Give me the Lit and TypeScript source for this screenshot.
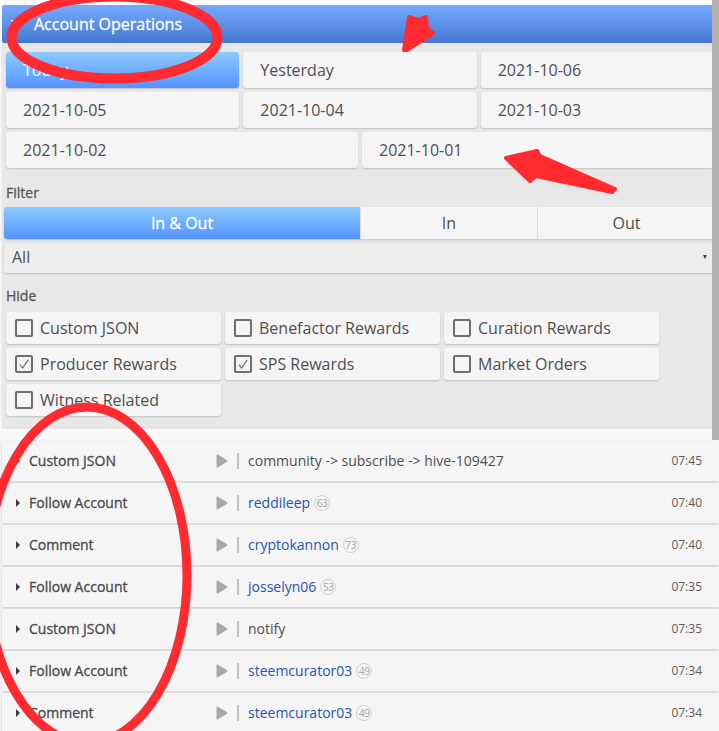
import { LitElement, html, css, svg, nothing } from "lit";
import { customElement } from "lit/decorators.js";

interface OpRow {
  name: string;
  detail: string;
  rep?: number;
  time: string;
}

const DATES = ["Today", "Yesterday", "2021-10-06", "2021-10-05", "2021-10-04", "2021-10-03"];
const WIDE_DATES = ["2021-10-02", "2021-10-01"];

const HIDE = [
  { label: "Custom JSON", on: false },
  { label: "Benefactor Rewards", on: false },
  { label: "Curation Rewards", on: false },
  { label: "Producer Rewards", on: true },
  { label: "SPS Rewards", on: true },
  { label: "Market Orders", on: false },
  { label: "Witness Related", on: false },
];

const ROWS: OpRow[] = [
  { name: "Custom JSON", detail: "community -> subscribe -> hive-109427", time: "07:45" },
  { name: "Follow Account", detail: "reddileep", rep: 63, time: "07:40" },
  { name: "Comment", detail: "cryptokannon", rep: 73, time: "07:40" },
  { name: "Follow Account", detail: "josselyn06", rep: 53, time: "07:35" },
  { name: "Custom JSON", detail: "notify", time: "07:35" },
  { name: "Follow Account", detail: "steemcurator03", rep: 49, time: "07:34" },
  { name: "Comment", detail: "steemcurator03", rep: 49, time: "07:34" },
];

@customElement("app-root")
export class AppRoot extends LitElement {
  static styles = css`
    :host {
      display: block;
      position: relative;
      width: 719px;
      height: 731px;
      overflow: hidden;
      background: #f9f9f9;
      font-family: "Open Sans", sans-serif;
      color: #4f4f4f;
    }

    .top {
      padding: 5px 0 0 2px;
    }

    .header {
      display: flex;
      align-items: center;
      gap: 12px;
      height: 38px;
      padding-left: 8px;
      border-radius: 2px;
      background: linear-gradient(#76aaff, #4577cf);
      color: #fff;
      font-size: 16px;
      font-weight: 500;
      -webkit-text-stroke: 0.3px #fff;
    }

    .caret-down {
      width: 0;
      height: 0;
      margin-bottom: 4px;
      border-left: 6px solid transparent;
      border-right: 6px solid transparent;
      border-top: 5px solid #e4e4e4;
    }

    .panel {
      background: #e8e8e8;
      padding: 9px 5px 11px 2px;
      box-shadow: 0 1px 2px rgba(0, 0, 0, 0.15);
      height: 384px;
      box-sizing: border-box;
    }

    .dates {
      display: grid;
      grid-template-columns: repeat(6, 1fr);
      gap: 4px;
      padding-left: 2px;
    }

    .btn {
      grid-column: span 2;
      height: 36px;
      display: flex;
      align-items: center;
      padding-left: 17px;
      background: #f5f5f5;
      border-radius: 3px;
      box-shadow: 0 1px 2px rgba(0, 0, 0, 0.18);
      font-size: 16px;
    }

    .btn.wide {
      grid-column: span 3;
    }

    .btn.active {
      background: linear-gradient(#8dcbff, #5393ff);
      color: #fff;
    }

    .label {
      margin: 16px 0 5px 2px;
      font-size: 14px;
      font-weight: 500;
      line-height: 18px;
      color: #555;
      -webkit-text-stroke: 0.3px #555;
    }

    .segments {
      display: grid;
      grid-template-columns: 356px 177px 1fr;
      height: 32px;
      border-radius: 3px;
      background: #f5f5f5;
      box-shadow: 0 1px 2px rgba(0, 0, 0, 0.18);
      font-size: 16px;
      margin-right: -1px;
    }

    .segment {
      display: flex;
      align-items: center;
      justify-content: center;
      border-left: 1px solid #e0e0e0;
    }

    .segment.active {
      border-left: none;
      border-radius: 3px 0 0 3px;
      background: linear-gradient(#8dcbff, #5393ff);
      color: #fff;
      font-weight: 500;
      -webkit-text-stroke: 0.3px #fff;
    }

    .select {
      display: flex;
      align-items: center;
      justify-content: space-between;
      box-sizing: border-box;
      height: 30px;
      margin: 4px -1px 0 0;
      padding: 0 8px 2px;
      background: #eeeeee;
      border-radius: 3px;
      box-shadow: 0 1px 2px rgba(0, 0, 0, 0.18);
      font-size: 16px;
    }

    .select-caret {
      width: 0;
      height: 0;
      border-left: 2.5px solid transparent;
      border-right: 2.5px solid transparent;
      border-top: 4px solid #444;
    }

    .select + .label {
      margin-top: 14px;
      margin-bottom: 7px;
    }

    .checks {
      display: grid;
      grid-template-columns: repeat(3, 215px);
      gap: 4px;
      padding-left: 2px;
    }

    .check {
      display: flex;
      align-items: center;
      gap: 7px;
      height: 32px;
      padding-left: 9px;
      background: #f5f5f5;
      border-radius: 3px;
      box-shadow: 0 1px 2px rgba(0, 0, 0, 0.18);
      font-size: 16px;
    }

    .box {
      width: 14px;
      height: 14px;
      border: 2px solid #6e6e6e;
      border-radius: 2px;
      display: flex;
      align-items: center;
      justify-content: center;
      flex: none;
    }

    .rows {
      display: flex;
      flex-direction: column;
      gap: 2px;
      margin-top: 14px;
    }

    .row {
      display: flex;
      align-items: center;
      box-sizing: border-box;
      height: 40px;
      padding-bottom: 1px;
      flex: none;
      background: #f5f5f5;
      box-shadow: 0 1px 3px rgba(0, 0, 0, 0.2);
      font-size: 14px;
    }

    .caret-right {
      width: 0;
      height: 0;
      margin-left: 14px;
      border-top: 4px solid transparent;
      border-bottom: 4px solid transparent;
      border-left: 4px solid #3c3c3c;
      flex: none;
    }

    .name {
      width: 187px;
      margin-left: 9px;
      font-weight: 500;
      color: #4a4a4a;
      -webkit-text-stroke: 0.3px #4a4a4a;
      flex: none;
    }

    .play {
      flex: none;
      display: block;
    }

    .pipe {
      flex: none;
      width: 2px;
      height: 16px;
      margin: 0 9px;
      background: #c0c0c0;
    }

    .detail {
      flex: 1;
      display: flex;
      align-items: center;
      gap: 4px;
    }

    .link {
      color: #1f55b5;
    }

    .rep {
      display: flex;
      align-items: center;
      justify-content: center;
      width: 14px;
      height: 14px;
      border: 1px solid #d2d2d2;
      border-radius: 50%;
      font-size: 10px;
      letter-spacing: -0.3px;
      color: #a5a5a5;
    }

    .time {
      margin-right: 17px;
      font-size: 12px;
      color: #5a5a5a;
    }

    .scrollbar {
      position: absolute;
      top: 0;
      right: 0;
      width: 7px;
      height: 440px;
      background: #b2b2b2;
    }

    .marks {
      position: absolute;
      inset: 0;
      pointer-events: none;
    }
  `;

  private renderMarks() {
    return svg`
      <ellipse cx="114.5" cy="37.5" rx="103" ry="41" fill="none" stroke="#ff2b30" stroke-width="10" />
      <ellipse cx="87" cy="575" rx="100" ry="168" fill="none" stroke="#ff2b30" stroke-width="9" />
      <polygon points="404,50 409,17 418,20 426,17 427,29 433,33 407,50" fill="#ff2b30" stroke="#ff2b30" stroke-width="4" stroke-linejoin="round" />
      <polygon points="506,158 537,151 540,156 615,189 612,192 536,176 530,181" fill="#ff2b30" stroke="#ff2b30" stroke-width="4" stroke-linejoin="round" />
    `;
  }

  render() {
    return html`
      <div class="top">
        <div class="header">
          <span class="caret-down"></span>
          <span>Account Operations</span>
        </div>
        <div class="panel">
          <div class="dates">
            ${DATES.map(
              (d, i) => html`<div class="btn ${i === 0 ? "active" : ""}">${d}</div>`
            )}
            ${WIDE_DATES.map((d) => html`<div class="btn wide">${d}</div>`)}
          </div>
          <div class="label">Filter</div>
          <div class="segments">
            <div class="segment active">In &amp; Out</div>
            <div class="segment">In</div>
            <div class="segment">Out</div>
          </div>
          <div class="select">
            <span>All</span>
            <span class="select-caret"></span>
          </div>
          <div class="label">Hide</div>
          <div class="checks">
            ${HIDE.map(
              (h) => html`
                <div class="check">
                  <span class="box">
                    ${h.on
                      ? html`<svg width="12" height="12" viewBox="0 0 13 13">
                          <path d="M2 7l3 4 6-9" fill="none" stroke="#666" stroke-width="1.2" />
                        </svg>`
                      : nothing}
                  </span>
                  <span>${h.label}</span>
                </div>
              `
            )}
          </div>
        </div>
        <div class="rows">
          ${ROWS.map(
            (r) => html`
              <div class="row">
                <span class="caret-right"></span>
                <span class="name">${r.name}</span>
                <svg class="play" width="12" height="14" viewBox="0 0 12 14">
                  <path d="M1.5 1.5L10.5 7L1.5 12.5Z" fill="#a8a8a8" stroke="#a8a8a8" stroke-width="2" stroke-linejoin="round" />
                </svg>
                <span class="pipe"></span>
                <span class="detail">
                  <span class=${r.rep ? "link" : ""}>${r.detail}</span>
                  ${r.rep ? html`<span class="rep">${r.rep}</span>` : nothing}
                </span>
                <span class="time">${r.time}</span>
              </div>
            `
          )}
        </div>
      </div>
      <div class="scrollbar"></div>
      <svg class="marks" width="719" height="731" viewBox="0 0 719 731">${this.renderMarks()}</svg>
    `;
  }
}
